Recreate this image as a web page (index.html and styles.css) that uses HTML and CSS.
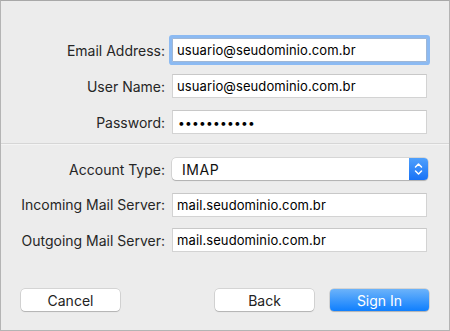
FILE: index.html
```html
<!DOCTYPE html>
<html>
<head>
<meta charset="utf-8">
<link rel="stylesheet" href="styles.css">
</head>
<body>
<div class="window">
  <div class="section first">
    <label class="lbl">Email Address:</label>
    <div class="field focused"><span>usuario@seudominio.com.br</span></div>
    <label class="lbl">User Name:</label>
    <div class="field"><span>usuario@seudominio.com.br</span></div>
    <label class="lbl">Password:</label>
    <div class="field"><span class="dots">•••••••••••</span></div>
  </div>
  <div class="separator"></div>
  <div class="section second">
    <label class="lbl">Account Type:</label>
    <div class="popup">
      <span class="popup-text">IMAP</span>
      <span class="stepper">
        <svg width="9" height="14" viewBox="0 0 9 14"><path d="M1.5 5 L4.5 2 L7.5 5" fill="none" stroke="#fff" stroke-width="1.5" stroke-linecap="round" stroke-linejoin="round"/><path d="M1.5 9 L4.5 12 L7.5 9" fill="none" stroke="#fff" stroke-width="1.5" stroke-linecap="round" stroke-linejoin="round"/></svg>
      </span>
    </div>
    <label class="lbl">Incoming Mail Server:</label>
    <div class="field"><span>mail.seudominio.com.br</span></div>
    <label class="lbl">Outgoing Mail Server:</label>
    <div class="field"><span>mail.seudominio.com.br</span></div>
  </div>
  <div class="buttons">
    <button class="btn">Cancel</button>
    <div class="spacer"></div>
    <button class="btn">Back</button>
    <button class="btn primary">Sign In</button>
  </div>
</div>
</body>
</html>
```
FILE: styles.css
```css
html, body {
  margin: 0;
  padding: 0;
}
body {
  width: 450px;
  height: 331px;
  font-family: Inter, "Liberation Sans", sans-serif;
  font-size: 13px;
}
.window {
  box-sizing: border-box;
  width: 450px;
  height: 331px;
  background: #ececec;
  border: 1px solid #b4b4b4;
  border-top-color: #a8a8a8;
  display: flex;
  flex-direction: column;
}
.section {
  display: grid;
  grid-template-columns: 164px 255px;
  column-gap: 7px;
  row-gap: 12px;
  grid-auto-rows: 24px;
  align-items: center;
}
.section.first {
  padding-top: 37px;
}
.section.second {
  padding-top: 12px;
  row-gap: 11.5px;
}
.lbl {
  text-align: right;
  color: #262626;
  white-space: nowrap;
  font-size: 14px;
}
.field {
  box-sizing: border-box;
  height: 24px;
  background: #fff;
  border: 1px solid #d3d3d3;
  border-top-color: #c8c8c8;
  display: flex;
  align-items: center;
  padding-left: 4px;
  color: #000;
  letter-spacing: 0.1px;
}
.field.focused {
  border-color: #9fb7d6;
  box-shadow: 0 0 0 3px #8cbaf2;
  border-radius: 1px;
}
.dots {
  font-size: 12px;
  letter-spacing: 0.25px;
  padding-left: 1px;
}
.separator {
  margin-top: 9px;
  height: 1px;
  background: #d6d6d6;
  border-bottom: 1px solid #f4f4f4;
}
.popup {
  box-sizing: border-box;
  height: 22px;
  width: 256px;
  background: #fff;
  border-radius: 4px;
  box-shadow: 0 0 0 0.5px rgba(0,0,0,0.18), 0 1px 1px rgba(0,0,0,0.18);
  display: flex;
  align-items: center;
  overflow: hidden;
}
.popup-text {
  flex: 1;
  padding-left: 10px;
  color: #111;
  font-size: 14px;
  letter-spacing: 0.6px;
}
.stepper {
  width: 19px;
  height: 22px;
  background: linear-gradient(#4fa0fc, #1872f6);
  display: flex;
  align-items: center;
  justify-content: center;
}
.buttons {
  display: flex;
  align-items: center;
  padding: 0 20px 0 20px;
  margin-top: auto;
  margin-bottom: 19px;
  gap: 16px;
}
.spacer {
  flex: 1;
}
.btn {
  box-sizing: border-box;
  width: 99px;
  height: 22px;
  border: none;
  border-radius: 4px;
  background: #fff;
  box-shadow: 0 0 0 0.5px rgba(0,0,0,0.2), 0 1px 1px rgba(0,0,0,0.16);
  font-family: Inter, "Liberation Sans", sans-serif;
  font-size: 14px;
  color: #222;
  padding: 0;
}
.btn.primary {
  background: linear-gradient(#6cb3fa, #0f7ffe);
  color: #fff;
}
```
